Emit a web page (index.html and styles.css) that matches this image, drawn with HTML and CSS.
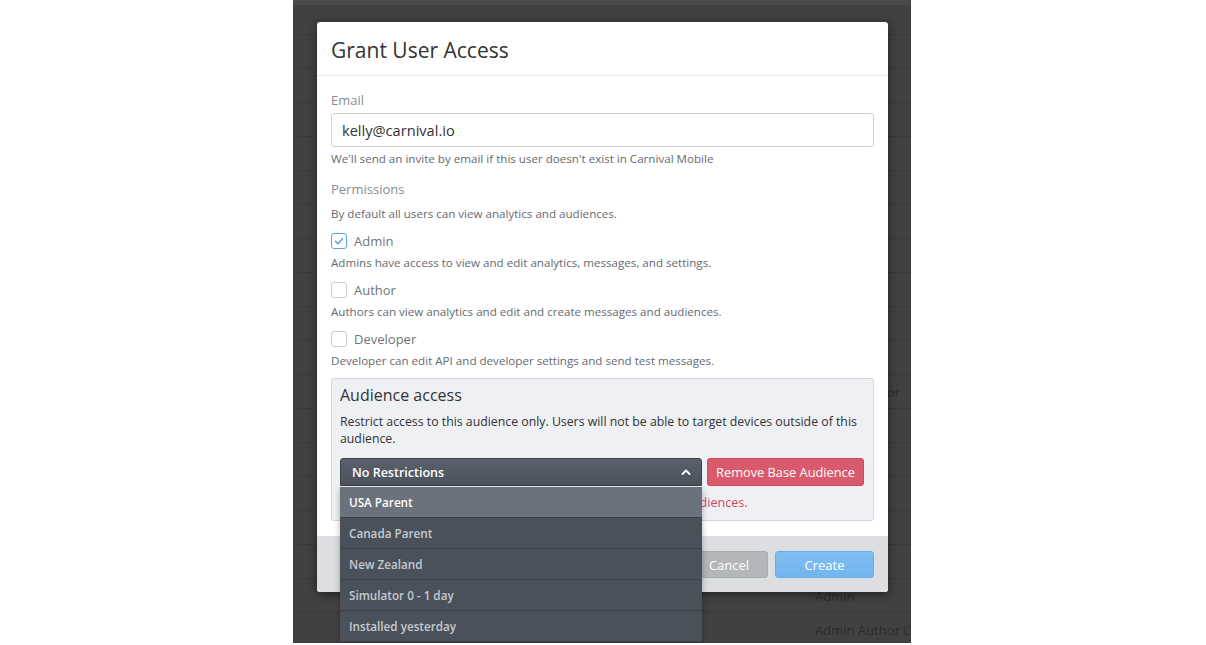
FILE: index.html
```html
<!DOCTYPE html>
<html lang="en">
<head>
    <meta charset="UTF-8">
    <meta name="viewport" content="width=device-width, initial-scale=1.0">
    <title>Grant User Access</title>
    <link rel="stylesheet" href="styles.css">
</head>
<body>
    <div class="app">
        <div class="app-top"></div>
        <div class="app-row first"></div>
        <div class="app-row"><span>Admin</span></div>
        <div class="app-row"><span>Admin</span></div>
        <div class="app-row"><span>Admin</span></div>
        <div class="app-row"><span>Admin</span></div>
        <div class="app-row"><span>Admin</span></div>
        <div class="app-row"><span>Admin</span></div>
        <div class="app-row"><span>Admin</span></div>
        <div class="app-row"><span>Admin</span></div>
        <div class="app-row"><span>Admin</span></div>
        <div class="app-row"><span>Admin</span></div>
        <div class="app-row"><span>Admin Author</span></div>
        <div class="app-row"><span>Admin</span></div>
        <div class="app-row"><span>Admin</span></div>
        <div class="app-row"><span>Admin</span></div>
        <div class="app-row"><span>Admin</span></div>
        <div class="app-row"><span>Admin</span></div>
        <div class="app-row"><span>Admin</span></div>
        <div class="app-row"><span>Admin Author Developer</span></div>

        <div class="modal">
            <div class="modal-header">
                <h2>Grant User Access</h2>
            </div>

            <div class="modal-body">
                <label class="field-label">Email</label>
                <input class="text-input" type="text" value="kelly@carnival.io">
                <p class="help">We'll send an invite by email if this user doesn't exist in Carnival Mobile</p>

                <div class="field-label perm-label">Permissions</div>
                <p class="help small-gap">By default all users can view analytics and audiences.</p>

                <div class="check-row">
                    <span class="checkbox checked">
                        <svg width="16" height="16" viewBox="0 0 16 16"><polyline points="4.5,8.3 7,10.8 11.5,5.6" fill="none" stroke="#4a9be0" stroke-width="1.4" stroke-linecap="round" stroke-linejoin="round"/></svg>
                    </span>
                    <span class="check-label">Admin</span>
                </div>
                <p class="help">Admins have access to view and edit analytics, messages, and settings.</p>

                <div class="check-row">
                    <span class="checkbox"></span>
                    <span class="check-label">Author</span>
                </div>
                <p class="help">Authors can view analytics and edit and create messages and audiences.</p>

                <div class="check-row">
                    <span class="checkbox"></span>
                    <span class="check-label">Developer</span>
                </div>
                <p class="help">Developer can edit API and developer settings and send test messages.</p>

                <div class="audience-box">
                    <h3>Audience access</h3>
                    <p class="audience-desc">Restrict access to this audience only. Users will not be able to target devices outside of this audience.</p>
                    <div class="audience-controls">
                        <div class="select-wrap">
                            <div class="select">
                                <span>No Restrictions</span>
                                <svg width="10" height="6" viewBox="0 0 10 6"><polyline points="1.5,5 5,1.5 8.5,5" fill="none" stroke="#fff" stroke-width="1.8" stroke-linecap="round" stroke-linejoin="round"/></svg>
                            </div>
                            <ul class="select-menu">
                                <li class="active">USA Parent</li>
                                <li>Canada Parent</li>
                                <li>New Zealand</li>
                                <li>Simulator 0 - 1 day</li>
                                <li>Installed yesterday</li>
                            </ul>
                        </div>
                        <button class="btn btn-danger">Remove Base Audience</button>
                    </div>
                    <p class="audience-note">Users with a base audience can only view and target these audiences.</p>
                </div>
            </div>

            <div class="modal-footer">
                <button class="btn btn-cancel">Cancel</button>
                <button class="btn btn-primary">Create</button>
            </div>
        </div>
    </div>
</body>
</html>
```

FILE: styles.css
```css
body {
    margin: 0;
    background: #fff;
    font-family: 'Open Sans', sans-serif;
}
.app {
    position: relative;
    margin-left: 293px;
    width: 618px;
    height: 643px;
    background: #414141;
    overflow: hidden;
}
.app-top {
    height: 5px;
    background: #4a4a4a;
}
.app-row {
    height: 33px;
    border-bottom: 1px solid #3a3a3a;
    display: flex;
    align-items: center;
    padding-left: 522px;
    font-size: 13px;
    color: #2b2b2b;
    white-space: nowrap;
}
.app-row.first {
    height: 29px;
}
.modal {
    position: absolute;
    left: 24px;
    top: 22px;
    width: 571px;
    background: #fff;
    border-radius: 3px;
    box-shadow: 0 2px 10px rgba(0, 0, 0, 0.5);
}
.modal-header {
    padding: 13px 14px 10px;
    border-bottom: 1px solid #e3e5e9;
}
.modal-header h2 {
    margin: 0;
    font-size: 21px;
    line-height: 30px;
    font-weight: 400;
    color: #333;
}
.modal-body {
    padding: 15px 14px;
}
.field-label {
    display: block;
    font-size: 13px;
    line-height: 18px;
    color: #878c94;
    margin-bottom: 4px;
}
.perm-label {
    margin-top: 13px;
    margin-bottom: 0;
}
.text-input {
    display: block;
    box-sizing: border-box;
    width: 100%;
    height: 34px;
    padding: 0 10px;
    border: 1px solid #cdd0d5;
    border-radius: 3px;
    font-family: inherit;
    font-size: 14.6px;
    color: #333;
}
.help {
    margin: 4px 0 0;
    font-size: 11.6px;
    line-height: 16px;
    color: #666a70;
}
.help.small-gap {
    margin-top: 8px;
}
.check-row {
    display: flex;
    align-items: center;
    gap: 7px;
    height: 20px;
    margin-top: 9px;
}
.checkbox {
    box-sizing: border-box;
    width: 16px;
    height: 16px;
    border: 1.5px solid #c9ccd1;
    border-radius: 3px;
    display: flex;
    align-items: center;
    justify-content: center;
}
.checkbox svg {
    flex: none;
}
.checkbox.checked {
    border-color: #5aa6e8;
}
.check-label {
    font-size: 13px;
    color: #70747a;
}
.audience-box {
    margin-top: 9px;
    padding: 5px 9px 9px 8px;
    background: #eef0f3;
    border: 1px solid #d3d6db;
    border-radius: 3px;
}
.audience-box h3 {
    margin: 0;
    font-size: 16px;
    line-height: 22px;
    font-weight: 400;
    color: #333;
}
.audience-desc {
    margin: 7px 0 0;
    font-size: 12.3px;
    line-height: 17px;
    color: #333;
}
.audience-controls {
    display: flex;
    gap: 5px;
    margin-top: 11px;
}
.select-wrap {
    position: relative;
    flex: 1;
}
.select {
    box-sizing: border-box;
    height: 28px;
    padding: 0 10px 0 11px;
    display: flex;
    align-items: center;
    justify-content: space-between;
    background: linear-gradient(#5a616c, #4b525c);
    border: 1px solid #3d434c;
    border-radius: 3px 3px 0 0;
    color: #fff;
    font-size: 12.5px;
    font-weight: 600;
}
.select-menu {
    position: absolute;
    top: 29px;
    left: 0;
    right: 0;
    margin: 0;
    padding: 0;
    list-style: none;
    background: #4a515b;
    box-shadow: 0 2px 6px rgba(0, 0, 0, 0.3);
}
.select-menu li {
    height: 30px;
    line-height: 30px;
    padding-left: 9px;
    border-bottom: 1px solid #3c424b;
    font-size: 11.7px;
    font-weight: 600;
    color: #c6cad0;
}
.select-menu li.active {
    background: #6b727c;
    color: #fff;
}
.btn {
    box-sizing: border-box;
    height: 28px;
    border-radius: 3px;
    font-family: inherit;
    font-size: 13px;
    color: #fff;
    cursor: pointer;
}
.btn-danger {
    width: 157px;
    padding: 0;
    font-size: 12.8px;
    background: #d85a6c;
    border: 1px solid #c94d5f;
}
.audience-note {
    margin: 9px 0 0;
    font-size: 12.5px;
    line-height: 16px;
    letter-spacing: 0.05px;
    color: #cf4760;
}
.modal-footer {
    display: flex;
    justify-content: flex-end;
    gap: 7px;
    padding: 15px 14px 14px;
    background: #dcdee2;
    border-radius: 0 0 3px 3px;
}
.modal-footer .btn {
    height: 27px;
}
.btn-cancel {
    width: 78px;
    background: #b3b6bb;
    border: 1px solid #a9acb1;
}
.btn-primary {
    width: 99px;
    background: linear-gradient(#7fbef3, #72b5ee);
    border: 1px solid #6aaee8;
}
```
